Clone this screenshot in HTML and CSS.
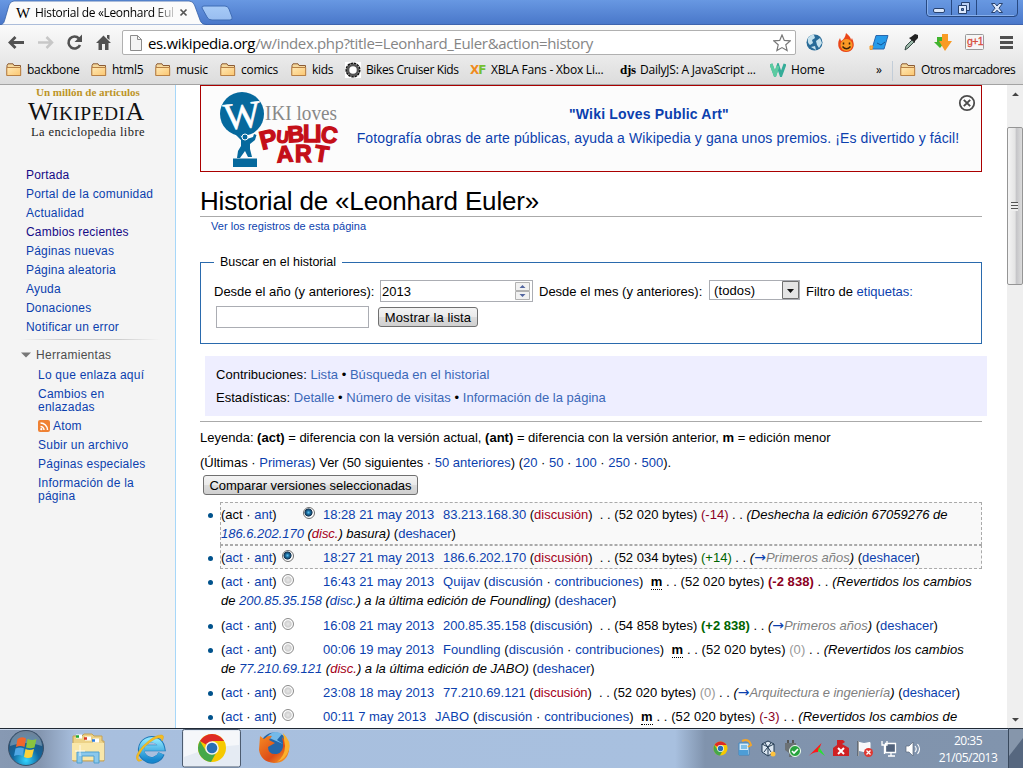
FILE: index.html
```html
<!DOCTYPE html>
<html lang="es">
<head>
<meta charset="utf-8">
<title>Historial de «Leonhard Euler»</title>
<link rel="stylesheet" href="styles.css">
</head>
<body>
<svg width="0" height="0" class="defs">
  <defs>
    <linearGradient id="fold" x1="0" y1="0" x2="1" y2="1"><stop offset="0" stop-color="#ffe9b5"/><stop offset="1" stop-color="#fbc670"/></linearGradient>
    <radialGradient id="orb" cx=".5" cy=".85" r=".85"><stop offset="0" stop-color="#35d5ff"/><stop offset=".45" stop-color="#11679f"/><stop offset="1" stop-color="#314a68"/></radialGradient>
    <linearGradient id="ie" x1="0" y1="0" x2="0" y2="1"><stop offset="0" stop-color="#8be5fd"/><stop offset="1" stop-color="#1687ce"/></linearGradient>
    <linearGradient id="ff" x1="0" y1="0" x2="1" y2="1"><stop offset="0" stop-color="#f68a22"/><stop offset=".6" stop-color="#dc4b17"/><stop offset="1" stop-color="#fcb22c"/></linearGradient>
    <symbol id="folder" viewBox="0 0 16 14"><path d="M1 12.500V2.500L2 .8H7l1 1.700h6.500v10z" fill="#f5d99e" stroke="#8a5a35"/><path d="M.8 4.500h13.900v8H.8z" fill="url(#fold)" stroke="#b98145"/></symbol>
    <symbol id="chrome" viewBox="0 0 30 30"><circle cx="15" cy="15" r="14" fill="#f6c900"/><path d="M15 15 2.900 8A14 14 0 0 1 27.100 8H15z" fill="#de2a25"/><path d="M2.900 8A14 14 0 0 0 14 29l5-9-4-5-6 3z" fill="#45a849"/><circle cx="15" cy="15" r="6.800" fill="#f4f4ee"/><circle cx="15" cy="15" r="5.300" fill="#286fb5"/></symbol>
  </defs>
</svg>
<div class="screen">
  <header class="tabstrip">
    <svg class="tabs" width="240" height="25" viewBox="0 0 240 25">
      <defs><linearGradient id="nt" x1="0" y1="0" x2="0" y2="1"><stop offset="0" stop-color="#a7cbf7"/><stop offset="1" stop-color="#98bdf0"/></linearGradient></defs>
      <path d="M0 25C4 24 4 22 5 19L9 5Q10.500 1 14 1H189Q193 1 194.500 5L200 20Q201.500 24.500 206 24.500V25z" fill="#fbfbfb" stroke="#3561a8" stroke-width=".8"/>
      <path d="M204 6H225Q228 6 229 9L232 17Q233 20 230 20H212Q208 20 207 17L202 8Q201.500 6 204 6z" fill="url(#nt)" stroke="#3f6cb5"/>
    </svg>
    <span class="fav">W</span><span class="tabtitle">Historial de «Leonhard Eul</span>
    <svg class="tabx" width="9" height="9"><path d="M1.500 1.500l6 6m0-6l-6 6" stroke="#555" stroke-width="1.700"/></svg>
    <svg class="winbtn" width="96" height="18" viewBox="0 0 96 18">
      <path d="M1.500 0V13Q1.500 16.500 5 16.500H89Q92.500 16.500 92.500 13V0M26.500 0V16M51.500 0V16" fill="#6b9ae033" stroke="#274982" /><path d="M2.500 0V13q0 2.500 2.500 2.500h84" fill="none" stroke="#88b0ec"/>
      <rect x="8.500" y="8.500" width="11" height="4" rx="1.500" fill="#dce8fb" stroke="#27426f"/>
      <path d="M36.500 2.500h8v8h-8z" fill="#bad0f4" stroke="#27426f"/><path d="M33.500 5.500h8v8h-8z" fill="#dce8fb" stroke="#27426f"/><path d="M36.500 8.500h2v2h-2z" fill="#5e88d0" stroke="#27426f"/>
      <path d="M66.500 3.500h3.500l2 2.500 2-2.500h3.500l-3.500 4.700 3.500 4.300H74l-2-2.300-2 2.300h-3.500l3.500-4.300z" fill="#dce8fb" stroke="#27426f"/>
    </svg>
  </header>
  <div class="toolbar">
    <svg class="nav" width="118" height="34" viewBox="0 0 118 34" fill="none">
      <path d="M10 17.500H24M15.500 12l-5.500 5.500 5.500 5.500" stroke="#515151" stroke-width="2.800"/>
      <path d="M38 17.500H52M46.500 12l5.500 5.500-5.500 5.500" stroke="#c7c7c7" stroke-width="2.500"/>
      <path d="M79 13.500A6 6 0 1 0 80 20" stroke="#515151" stroke-width="2.600"/><path d="M82 9.500V17H74.500z" fill="#515151"/>
      <path d="M96 18 103.500 10.500 111 18H108.500V25H105V19H102V25H98.500V18zM107 10h2.500v5L107 13z" fill="#515151"/>
    </svg>
    <div class="omni">
      <svg width="12" height="16"><path d="M.5.5h7l4 4v11H.5z" fill="#f4f4f4" stroke="#8b8b8b"/><path d="M7.500.5v4h4" fill="none" stroke="#8b8b8b"/></svg>
      <span class="url"><b>es.wikipedia.org</b>/w/index.php?title=Leonhard_Euler&amp;action=history</span>
      <svg class="star" width="18" height="18" viewBox="0 0 18 18"><path d="M9 1l2.300 5.400 5.900.5-4.400 3.900 1.300 5.800L9 13.600 3.900 16.600l1.300-5.800L.8 6.900l5.900-.5z" fill="#fff" stroke="#777" stroke-width="1.200"/></svg>
    </div>
    <svg class="ext" width="227" height="34" viewBox="796 25 227 34">
      <circle cx="814.500" cy="42.500" r="8" fill="#286b98"/><path d="M808 38q3-4 6-3l1 3-3 2 1 3-3 2q-3-2-2-7zM816 41l4-3 2 5-3 5-2-3zM811 47l4-1 1 4z" fill="#c6e2ee"/>
      <path d="M846 33q5 4 5 7l1-2q3 7 1 10-2 4-7 4-5 0-7-4-2-5 1-10l1 3q4-2 5-8z" fill="#ea4619"/><circle cx="846.500" cy="45" r="6" fill="#fb9a25"/><path d="M843.500 42.500v2M849.500 42.500v2M842.500 46.500q4 4.500 8 0" stroke="#3b2109" stroke-width="1.500" fill="none"/>
      <path d="M876 35.500h12l-4 13.500h-12z" fill="#269bea" stroke="#2867ad"/><path d="M870 46h3l-1 3.500h-2z" fill="#f7b35a" stroke="#f39a28"/><path d="M877 43l4 2 4-3" stroke="#125596" fill="none"/>
      <path d="M905 50l1-4 7-7 2 2-7 7z" fill="#9db9aa" stroke="#354a45"/><path d="M909 38l2-1 4-3 3 1v3l-3 3v2z" fill="#222"/>
      <path d="M937 37h5v5h3l-5 6-6-6h3z" fill="#41b42e"/><path d="M942 34h6v7h4l-7 10-6-10h3z" fill="#f99b24"/>
      <rect x="965.500" y="34.500" width="18" height="15" rx="1" fill="#f6f6f6" stroke="#999"/><text x="967" y="45" class="gp">g+1</text>
      <path d="M1000 37.500h13M1000 42.500h13M1000 47.500h13" stroke="#505050" stroke-width="2.900"/>
    </svg>
  </div>
  <nav class="bookmarks">
    <span class="bm" style="left:6px"><svg width="16" height="14"><use href="#folder"/></svg><i class="b1">backbone</i></span>
    <span class="bm" style="left:91px"><svg width="16" height="14"><use href="#folder"/></svg><i>html5</i></span>
    <span class="bm" style="left:155px"><svg width="16" height="14"><use href="#folder"/></svg><i>music</i></span>
    <span class="bm" style="left:220px"><svg width="16" height="14"><use href="#folder"/></svg><i>comics</i></span>
    <span class="bm" style="left:291px"><svg width="16" height="14"><use href="#folder"/></svg><i>kids</i></span>
    <span class="bm" style="left:345px"><svg width="16" height="16"><path d="M0 0h16v16H0z" fill="#fff"/><circle cx="8" cy="8" r="6.700" fill="none" stroke="#111" stroke-width="1.700" stroke-dasharray="2.600 .6"/><circle cx="8" cy="8" r="5" fill="none" stroke="#555" stroke-width="2.500"/></svg><i class="b6">Bikes Cruiser Kids</i></span>
    <span class="bm" style="left:470px"><b class="xf">X<em>F</em></b><i class="b7">XBLA Fans - Xbox Li...</i></span>
    <span class="bm" style="left:620px"><b class="djs">djs</b><i class="b8">DailyJS: A JavaScript ...</i></span>
    <span class="bm" style="left:770px"><svg width="16" height="14"><path d="M1 1l4 11 3-9 3 9 4-11" fill="none" stroke="#35ac98" stroke-width="3"/><path d="M1 1l4 11 3-9" fill="none" stroke="#5dcba1" stroke-width="3"/></svg><i class="b9">Home</i></span>
    <span class="bm" style="left:876px"><i>»</i></span>
    <span class="sep"></span>
    <span class="bm" style="left:900px"><svg width="16" height="14"><use href="#folder"/></svg><i class="b10">Otros marcadores</i></span>
  </nav>
  <main class="view">
    <aside class="side">
      <div class="million">Un millón de artículos</div>
      <div class="wordmark"><big>W</big>IKIPEDI<big>A</big></div>
      <div class="slogan">La enciclopedia libre</div>
      <ul class="menu">
        <li class="seen">Portada</li><li>Portal de la comunidad</li><li>Actualidad</li><li class="seen">Cambios recientes</li><li>Páginas nuevas</li><li>Página aleatoria</li><li>Ayuda</li><li>Donaciones</li><li>Notificar un error</li>
      </ul>
      <div class="rule"></div>
      <h5><svg width="10" height="6"><path d="M0 .5h10L5 5.500z" fill="#777"/></svg>Herramientas</h5>
      <ul class="tools">
        <li>Lo que enlaza aquí</li><li>Cambios en<br>enlazadas</li><li><svg width="12" height="12"><rect width="12" height="12" rx="2" fill="#ef8133"/><path d="M2.500 6.500a3.500 3.500 0 0 1 3.500 3.500M2.500 3a7 7 0 0 1 7 7" fill="none" stroke="#fff" stroke-width="1.500"/><circle cx="3.300" cy="9.200" r="1.100" fill="#fff"/></svg> Atom</li><li>Subir un archivo</li><li>Páginas especiales</li><li>Información de la<br>página</li>
      </ul>
    </aside>
    <article class="content">
      <section class="banner">
        <svg width="130" height="84" viewBox="216 87 130 84">
          <circle cx="242" cy="114" r="22" fill="#06699d"/>
          <path d="M238 133l4 4.500 5 1.500 6-2 1-3 2.500 1-1.500 5-5 4v5l2 8h-4l-3-6-5 7h-3l1-7 3-5v-6l-6-6z" fill="#06699d"/><circle cx="245" cy="137" r="3" fill="#06699d" stroke="#fcfcfc"/><path d="M233 158.500h24v8.500h-24z" fill="#06699d"/>
          <text transform="translate(225 130) rotate(-6)" class="bw" textLength="37" lengthAdjust="spacingAndGlyphs">W</text><text x="265" y="120" class="iki" textLength="72" lengthAdjust="spacingAndGlyphs">IKI loves</text>
          <g class="pub"><text transform="translate(262 150) rotate(-14)" class="big">P</text><text transform="translate(276 142) rotate(6)" class="sm">U</text><text transform="translate(288 142.500)rotate(-4)">B</text><text x="303" y="142">L</text><text x="315" y="142">I</text><text transform="translate(320 141.500)rotate(8)">C</text><text transform="translate(277 162.500)rotate(-4)">A</text><text x="295" y="162">R</text><text transform="translate(313.500 160.500)rotate(9)">T</text></g>
        </svg>
        <div class="btext"><b>"Wiki Loves Public Art"</b><span>Fotografía obras de arte públicas, ayuda a Wikipedia y gana unos premios. ¡Es divertido y fácil!</span></div>
        <svg class="bclose" width="18" height="18"><circle cx="9" cy="9" r="7.200" fill="none" stroke="#4c4c4c" stroke-width="1.800"/><path d="M5.800 5.800l6.400 6.400m0-6.400l-6.400 6.400" stroke="#4c4c4c" stroke-width="1.900"/></svg>
      </section>
      <h1>Historial de «Leonhard Euler»</h1>
      <div class="sub">Ver los registros de esta página</div>
      <fieldset class="search"><legend>Buscar en el historial</legend>
        <div class="frow"><span class="l1">Desde el año (y anteriores):</span><span class="box year">2013<svg width="15" height="18"><path d="M.5 8.500V.5h14v8zM.5 17.500v-8h14v8z" fill="#f1f1f1" stroke="#b2b2b2"/><path d="M4.500 6h6l-3-3zM4.500 12h6l-3 3z" fill="#5366a0"/></svg></span><span class="l2">Desde el mes (y anteriores):</span><span class="box sel">(todos)<svg width="17" height="18"><path d="M.5.5h16v17H.5z" fill="#e4e4e4" stroke="#707070"/><path d="M5 8h7l-3.500 4z" fill="#111"/></svg></span><span class="l3">Filtro de <a>etiquetas:</a></span></div>
        <div class="frow two"><span class="box tag"></span><button class="btn show">Mostrar la lista</button></div>
      </fieldset>
      <div class="info"><div class="i1">Contribuciones: <a>Lista</a> • <a>Búsqueda en el historial</a></div><div class="i2">Estadísticas: <a>Detalle</a> • <a>Número de visitas</a> • <a>Información de la página</a></div></div>
      <div class="legend"><span>Leyenda: <b>(act)</b> = diferencia con la versión actual, <b>(ant)</b> = diferencia con la versión anterior, <b>m</b> = edición menor</span></div>
      <div class="pager">(Últimas · <a>Primeras</a>) Ver (50 siguientes · <a>50 anteriores</a>) (<a>20</a> · <a>50</a> · <a>100</a> · <a>250</a> · <a>500</a>).</div>
      <button class="btn cmp">Comparar versiones seleccionadas</button>
      <ul class="hist">
        <li class="on"><div><span class="ca">(act · <a>ant</a>)</span><span class="rd right"><i class="r ck"></i></span><a class="dt">18:28 21 may 2013</a><span class="r1"><a>83.213.168.30</a> (<a class="red">discusión</a>)&nbsp; . . (52 020 bytes) <span class="neg">(-14)</span> . . <em>(Deshecha la edición 67059276 de</em></span></div><div class="c1"><em><a>186.6.202.170</a> (<a class="red">disc.</a>) basura)</em> (<a>deshacer</a>)</div></li>
        <li class="on"><div><span class="ca">(<a>act</a> · <a>ant</a>)</span><span class="rd"><i class="r ck"></i></span><a class="dt">18:27 21 may 2013</a><span class="r2"><a>186.6.202.170</a> (<a class="red">discusión</a>)&nbsp; . . (52 034 bytes) <span class="pos">(+14)</span> . . <em>(<a class="ar">→</a><s>Primeros años</s>)</em> (<a>deshacer</a>)</span></div></li>
        <li><div><span class="ca">(<a>act</a> · <a>ant</a>)</span><span class="rd"><i class="r"></i></span><a class="dt">16:43 21 may 2013</a><span class="r3"><a>Quijav</a> (<a>discusión</a> · <a>contribuciones</a>)&nbsp; <b class="m">m</b> . . (52 020 bytes) <b class="neg">(-2 838)</b> . . <em>(Revertidos los cambios</em></span></div><div class="c3"><em>de <a>200.85.35.158</a> (<a>disc.</a>) a la última edición de Foundling)</em> (<a>deshacer</a>)</div></li>
        <li><div><span class="ca">(<a>act</a> · <a>ant</a>)</span><span class="rd"><i class="r"></i></span><a class="dt">16:08 21 may 2013</a><span class="r4"><a>200.85.35.158</a> (<a>discusión</a>)&nbsp; . . (54 858 bytes) <b class="pos">(+2 838)</b> . . <em>(<a class="ar">→</a><s>Primeros años</s>)</em> (<a>deshacer</a>)</span></div></li>
        <li class="short"><div><span class="ca">(<a>act</a> · <a>ant</a>)</span><span class="rd"><i class="r"></i></span><a class="dt">00:06 19 may 2013</a><span class="r5"><a>Foundling</a> (<a>discusión</a> · <a>contribuciones</a>)&nbsp; <b class="m">m</b> . . (52 020 bytes) <span class="zero">(0)</span> . . <em>(Revertidos los cambios</em></span></div><div class="c5"><em>de <a>77.210.69.121</a> (<a class="red">disc.</a>) a la última edición de JABO)</em> (<a>deshacer</a>)</div></li>
        <li><div><span class="ca">(<a>act</a> · <a>ant</a>)</span><span class="rd"><i class="r"></i></span><a class="dt">23:08 18 may 2013</a><span class="r6"><a>77.210.69.121</a> (<a class="red">discusión</a>)&nbsp; . . (52 020 bytes) <span class="zero">(0)</span> . . <em>(<a class="ar">→</a><s>Arquitectura e ingeniería</s>)</em> (<a>deshacer</a>)</span></div></li>
        <li><div><span class="ca">(<a>act</a> · <a>ant</a>)</span><span class="rd"><i class="r"></i></span><a class="dt d7">00:11 7 may 2013</a><span class="r7"><a>JABO</a> (<a>discusión</a> · <a>contribuciones</a>)&nbsp; <b class="m">m</b> . . (52 020 bytes) <span class="neg">(-3)</span> . . <em>(Revertidos los cambios de</em></span></div></li>
      </ul>
    </article>
    <div class="scroll">
      <svg width="16" height="643"><path d="M5 11h7L8.500 7.500zM5 633h7l-3.500 3.500z" fill="#444"/></svg>
      <div class="thumb"><i></i></div>
    </div>
  </main>
  <footer class="task">
    <svg width="1023" height="40" viewBox="0 728 1023 40">
      <circle cx="26" cy="748" r="17.500" fill="url(#orb)" stroke="#3b5068"/><path d="M10 746a16 15 0 0 1 32 0q-16-6-32 0z" fill="#fff" opacity=".3"/>
      <path d="M17.500 739q4-3 8.500-.5l-1.500 8.500q-4-2-8.500 0z" fill="#f0672c"/><path d="M27.500 739q5 2 9 0l-2 8.500q-4 1.500-8.500 0z" fill="#8ac43f"/><path d="M15.500 748.500q5-2 8.500 0l-1.500 7.500q-4-2-8.500 0z" fill="#4fa7e5"/><path d="M25.500 749q4 2 8.500 0l-2 8q-4 2-8 0z" fill="#fbd23c"/>
      <path d="M73 740V736h9l2-2h8l2 2h8v5h2v20H73z" fill="#ecd287" stroke="#c5a254"/><path d="M76 736.500h6M85 738.500h6M93 740.500h6" stroke="#fff" stroke-width="4"/><path d="M76 736.500h3" stroke="#1fa834" stroke-width="2.500"/><path d="M84 738.500h3" stroke="#d93524" stroke-width="2.500"/><path d="M92 740.500h3" stroke="#2d7ddf" stroke-width="2.500"/><path d="M72 743h32v17H72z" fill="#f9e7a9"/><path d="M77 763v-11h22v11h-5v-7H82v7z" fill="#8ac8ec" stroke="#4e9fce"/><path d="M80 745v11M75 751h10" stroke="#fff" opacity=".8"/>
      <path d="M161.500 753.500a10.500 10.500 0 1 1 .5-5.500H145" fill="none" stroke="#1a76b8" stroke-width="6.500"/><path d="M161 753.500a10 10 0 1 1 .5-5.500H145" fill="none" stroke="url(#ie)" stroke-width="5.500"/><path d="M138 761q-5-4 5-15 12-12 19-11 3 1 0 6 0-5-7-2-11 6-16 16-3 5 3 5-3 2-4 1z" fill="#f5bd22" stroke="#dca41f" stroke-width=".5"/>
      <rect x="182.500" y="729.500" width="58" height="37.500" rx="2" fill="#e5ebf3" stroke="#4d5c70"/><path d="M184 731h55v14q-28 1-55 12z" fill="#fff" opacity=".6"/><use href="#chrome" x="197" y="733" width="30" height="30"/>
      <circle cx="274.500" cy="747" r="14.500" fill="#2367aa"/><path d="M267 737q7-8 15-3l-5 6 6 4z" fill="#73b9e9"/><path d="M260 736l4 3q4-4 8-3l-3 4 6 3-7 4q0 8 9 7 7-2 6-12l-1-5q7 8 7 13-2 13-15 13-13-1-15-13z" fill="url(#ff)"/><path d="M283 733q9 9 6 17-3 9-12 12 8-6 8-16z" fill="#fbb12d"/>
      <use href="#chrome" x="713" y="741" width="15" height="15"/>
      <path d="M739 743h10v12h-10z" fill="#d8ecfa" stroke="#3c86c0"/><path d="M742 741q7-3 9 4l-3 2" fill="none" stroke="#f3a52a" stroke-width="2"/><path d="M739 750h9v5h-9z" fill="#4d9dd6"/><path d="M741 745h6v4h-6z" fill="#7fc0ea"/>
      <path d="M762 744l6-3 6 3v8l-6 4-6-4z" fill="#dce7f2" stroke="#213951"/><path d="M762 744l6 3 6-3M768 747v8M765 743l6 9M771 743l-7 9" stroke="#213951" fill="none"/><circle cx="773" cy="754" r="2.500" fill="#ffc33e"/>
      <path d="M788 740v3M793 740v3" stroke="#555" stroke-width="2"/><path d="M785 743h11v7l-4 3v4h-3v-4l-4-3z" fill="#6b7175"/><circle cx="795" cy="751" r="5.500" fill="#27a33e" stroke="#f3fff3"/><path d="M792 751l2 2 4-4" fill="none" stroke="#fff" stroke-width="1.600"/>
      <path d="M808.500 756l13-13-3.500 9q-5 0-9.500 4z" fill="#ff181b"/><path d="M819 747l6 9-7-5z" fill="#27e431"/>
      <path d="M833 748l4-3v-5h6l2 2-3 2 7 4v8h-16z" fill="#cf2023"/><path d="M838 748l6 6m0-6l-6 6" stroke="#fff" stroke-width="2"/>
      <path d="M858.500 741v15M859 742.500l5 1 6-1v8l-6 1-5-1z" fill="#f7f8fa" stroke="#fff"/><path d="M858 741v15" stroke="#444"/><circle cx="868.500" cy="752.500" r="4.500" fill="#df3731"/><path d="M866.500 750.500l4 4m0-4l-4 4" stroke="#fff" stroke-width="1.300"/>
      <path d="M885.500 743.500h10v9h-10zM888 756h7M891 753v3" fill="#52637c" stroke="#fff" stroke-width="1.300"/><path d="M882 741v4h5v-4M884.500 745v9" stroke="#fff" fill="none" stroke-width="1.300"/>
      <path d="M906 746h3l4-4v14l-4-4h-3z" fill="#fff" stroke="#5a687c" stroke-width=".7"/><path d="M915 746q2.500 3 0 6M917.500 744q4 5 0 10" fill="none" stroke="#fff" stroke-width="1.100"/>
      <path d="M1008.500 728v40" stroke="#39495d"/><path d="M1009 729h14v39h-14z" fill="#56677f"/><path d="M1009 729h14v9l-14 18z" fill="#a7b5c8" opacity=".6"/>
    </svg>
    <div class="clock"><span class="tm">20:35</span><span class="da">21/05/2013</span></div>
  </footer>
</div>
</body>
</html>
```
FILE: styles.css
```css
* { box-sizing: border-box; }
body { margin: 0; font-family: "Liberation Sans", Arial, sans-serif; font-size: 13px; color: #000; }
ul { list-style: none; margin: 0; padding: 0; }
svg { display: block; flex: none; }
.defs { position: absolute; }
a { color: #0b3fae; }
.screen { width: 1023px; height: 768px; overflow: hidden; display: flex; flex-direction: column; }

/* browser window */
.tabstrip { height: 25px; flex: none; position: relative; background: linear-gradient(#6898e2, #4a78ca 95%, #36569b); }
.tabs { position: absolute; left: 0; top: 0; }
.fav, .tabtitle, .tabx, .winbtn { position: absolute; }
.fav { left: 16px; top: 5px; font: 15px/16px "Liberation Serif", serif; letter-spacing: -1px; }
.tabtitle { left: 35px; top: 4px; width: 139px; overflow: hidden; font: 12px/18px "Open Sans", sans-serif; letter-spacing: -.32px; white-space: nowrap; -webkit-mask-image: linear-gradient(90deg, #000 118px, transparent 144px); }
.tabx { left: 179px; top: 8px; }
.winbtn { left: 925px; top: 0; }
.toolbar { height: 34px; flex: none; display: flex; background: linear-gradient(#fafafa, #e9e9e9); }
.omni { width: 674px; height: 25px; margin: 5px 0 0 4px; border: 1px solid #b0b0b0; border-radius: 2px; background: #fff; display: flex; align-items: center; padding: 0 4px 0 7px; }
.url { flex: 1; margin-left: 6px; font: 15px/22px "Open Sans", sans-serif; letter-spacing: -.35px; color: #858585; white-space: nowrap; }
.url b { font-weight: 400; color: #000; }
.gp { font: 10.500px "Liberation Sans", sans-serif; fill: #d84d40; stroke: #d84d40; stroke-width: .3px; letter-spacing: -.6px; }
.bookmarks { height: 26px; flex: none; position: relative; background: linear-gradient(#e9e9e9, #dcdcdc); border-bottom: 1px solid #a3a3a3; }
.bm { position: absolute; top: 2px; height: 18px; display: flex; align-items: center; gap: 5px; white-space: nowrap; }
.bm i { font: 12px/18px "Open Sans", sans-serif; letter-spacing: -.27px; }
.bm .b6 { letter-spacing: -.38px; }
.bm .b7 { letter-spacing: -.22px; }
.bm .b8 { letter-spacing: -.22px; }
.bm .b9 { letter-spacing: -.1px; }
.bm .b10 { letter-spacing: -.45px; }
.xf { font: bold 12px/16px "DejaVu Sans", sans-serif; color: #f08a1d; width: 16px; letter-spacing: -1px; }
.xf em { font-style: normal; color: #75c030; }
.djs { font: bold 13px/16px "Liberation Serif", serif; width: 15px; letter-spacing: -.3px; }
.sep { position: absolute; left: 892px; top: 2px; width: 1px; height: 20px; background: #c2cdd8; }

/* page */
.view { height: 643px; flex: none; display: flex; overflow: hidden; background: #fff; }
.side { width: 176px; flex: none; background: #f4f4f4; border-right: 1px solid #a7d7f9; color: #0b3fae; font-size: 12px; white-space: nowrap; }
.million { font: bold 11px/14px "Liberation Serif", serif; color: #bd9428; margin-left: 36px; height: 15px; letter-spacing: -.02px; }
.wordmark { margin-left: 28px; font: 19.500px/24px "Liberation Serif", serif; color: #111; height: 24px; letter-spacing: .45px; }
.wordmark big { font-size: 26px; letter-spacing: -.6px; }
.slogan { margin: 1px 0 0 31px; font: 12.500px/15px "Liberation Serif", serif; color: #222; letter-spacing: .4px; }
.menu { margin: 26px 0 0 26px; }
.menu li { height: 19px; line-height: 19px; letter-spacing: .2px; }
.menu .seen { color: #140a86; }
.rule { height: 1px; margin: 2px 15px 0 20px; background: linear-gradient(90deg, #f4f4f4, #ccc 30%, #ccc 70%, #f4f4f4); }
.side h5 { margin: 5px 0 0 21px; font: 12px/20px "Liberation Sans", sans-serif; color: #4d4d4d; display: flex; align-items: center; gap: 5px; letter-spacing: .28px; }
.tools { margin: 4px 0 0 38px; }
.tools li { line-height: 13px; padding-bottom: 6px; letter-spacing: .23px; }
.tools svg { display: inline-block; vertical-align: -2px; }
.content { width: 787px; margin-left: 24px; flex: none; white-space: nowrap; }
.banner { width: 782px; height: 87px; border: 1px solid #a00; background: #fcfcfc; display: flex; position: relative; }
.banner > svg:first-child { margin-left: 15px; margin-top: 1px; }
.btext { width: 604px; margin-left: 10px; padding-top: 16px; color: #0b3fae; font-size: 14px; line-height: 24px; text-align: center; letter-spacing: .125px; }
.btext b, .btext span { display: block; }
.btext b { padding-right: 18px; letter-spacing: .18px; }
.bclose { position: absolute; right: 5px; top: 8px; }
.bw { font: 38px "Liberation Serif", serif; fill: #fff; stroke: #fff; stroke-width: .6px; }
.iki { font: 20px "Liberation Serif", serif; fill: #888; }
.pub { font: bold 23px "Liberation Sans", sans-serif; fill: #c40f18; stroke: #c40f18; stroke-width: 1.300px; }
.pub .sm { font-size: 17px; }
.pub .big { font-size: 26px; }
h1 { width: 782px; height: 45px; margin: 0; border-bottom: 1px solid #aaa; padding-top: 14px; font: 26px/31px "Liberation Sans", sans-serif; letter-spacing: -.17px; }
.sub { font-size: 11px; line-height: 18px; padding-left: 11px; color: #0b3fae; letter-spacing: .03px; }
.search { width: 782px; height: 91px; margin: 18px 0 0; padding: 0 13px; border: 1px solid #2a6aad; }
.search legend { padding: 0 6px; margin-left: 0; line-height: 18px; font-size: 12.500px; }
.frow { display: flex; height: 22px; margin-top: 9px; line-height: 23px; }
.frow.two { margin-top: 4px; padding-left: 2px; gap: 9px; }
.box { border: 1px solid #abadb3; background: #fff; height: 22px; line-height: 21px; display: flex; justify-content: space-between; }
.year { width: 153px; padding: 1px 2px 0 1px; line-height: 20px; }
.sel { width: 91px; height: 20px; line-height: 19px; padding-left: 4px; letter-spacing: .1px; }
.tag { width: 153px; }
.l1 { width: 166px; } .l2 { width: 176px; padding-left: 6px; } .l3 { padding-left: 6px; }
.btn { font: 13px/16px "Liberation Sans", sans-serif; height: 20px; padding: 1px 0 0; border: 1px solid #707070; border-radius: 3px; background: linear-gradient(#f3f3f3, #eaeaea 49%, #dcdcdc 50%, #cfcfcf); color: #000; white-space: nowrap; }
.show { width: 100px; margin-top: 1px; letter-spacing: .12px; }
.info { margin: 12px 0 0 5px; width: 782px; height: 60px; background: #eef; padding: 7px 11px 0; line-height: 23px; letter-spacing: .03px; }
.info a { color: #3b68b8; }
.legend { width: 782px; margin-top: 5px; border-top: 1px solid #aaa; line-height: 19px; padding-top: 6px; }
.pager { line-height: 19px; margin-top: 6px; }
.cmp { display: block; width: 215px; margin: 3px 0 0 3px; letter-spacing: -.03px; }
.hist { margin: 7px 0 0 20px; }
.hist li { height: 24px; width: 762px; padding: 3px 0 0 1px; line-height: 19px; position: relative; }
.hist li:has(div + div) { height: 44px; }
.hist li.on:has(div + div), .hist li.short { height: 43px; }
.hist li.on { border: 1px dashed #aaa; background: #f9f9f9; padding: 2px 0 0; }
.hist li::before { content: ""; position: absolute; left: -12px; top: 11px; width: 5px; height: 5px; border-radius: 50%; background: #00528c; }
.hist li.on::before { left: -13px; top: 10px; }
.hist div { display: flex; height: 19px; white-space: pre; }
.hist div:last-child:not(:first-child) { display: block; }
.hist .ar { font: italic 14px/10px "DejaVu Sans", sans-serif; letter-spacing: 0; }
.ca { width: 61px; }
.rd { width: 41px; }
.rd.right { padding-left: 21px; }
.r { display: block; width: 12px; height: 12px; margin-top: 2px; border-radius: 50%; border: 1px solid #8b8b8b; background: radial-gradient(circle, #e8e8e8 0, #cfcfcf 45%, #fff 60%, #ddd 100%); }
.r.ck { background: radial-gradient(circle at 45% 45%, #5cc0f0 0, #1a6a9c 25%, #14304c 48%, #fff 56%); border-color: #707070; }
.dt { width: 120px; }
.d7 { width: 112px; }
.c1, .c3 { letter-spacing: -.02px; }
.r3 { letter-spacing: .045px; }
.r5 { letter-spacing: .06px; }
.r6 { letter-spacing: -.03px; }
.r7 { letter-spacing: .085px; }
.red { color: #a50019; }
.neg { color: #8b0022; } .pos { color: #006400; } .zero { color: #999; }
s { text-decoration: none; color: #808080; }
.m { border-bottom: 1px dotted #000; }

/* scrollbar */
.scroll { width: 16px; margin-left: 20px; background: #efefef; position: relative; }
.thumb { position: absolute; left: 0; top: 42px; width: 16px; height: 158px; border: 1px solid #959595; border-radius: 2px; background: linear-gradient(90deg, #f4f4f4, #e4e4e4 50%, #c5c5c8 60%, #dcdcdc); }
.thumb i { position: absolute; left: 3px; top: 74px; width: 7px; height: 9px; background: repeating-linear-gradient(#555 0 1px, #eee 1px 3px); }

/* taskbar */
.task { height: 40px; flex: none; position: relative; border-top: 1px solid #202934; box-shadow: inset 0 1px #c7d6ea; background: linear-gradient(90deg, #8799b3 0, #8496b0 40px, #a8bfde 75px, #a8c0df 675px, #8093ad 705px, #8194ad); }
.task svg { margin-top: -1px; }
.clock { position: absolute; left: 938px; top: 3px; width: 60px; color: #fff; font: 12px/17px "Open Sans", sans-serif; text-align: center; }
.clock span { display: block; letter-spacing: -.5px; }
```
